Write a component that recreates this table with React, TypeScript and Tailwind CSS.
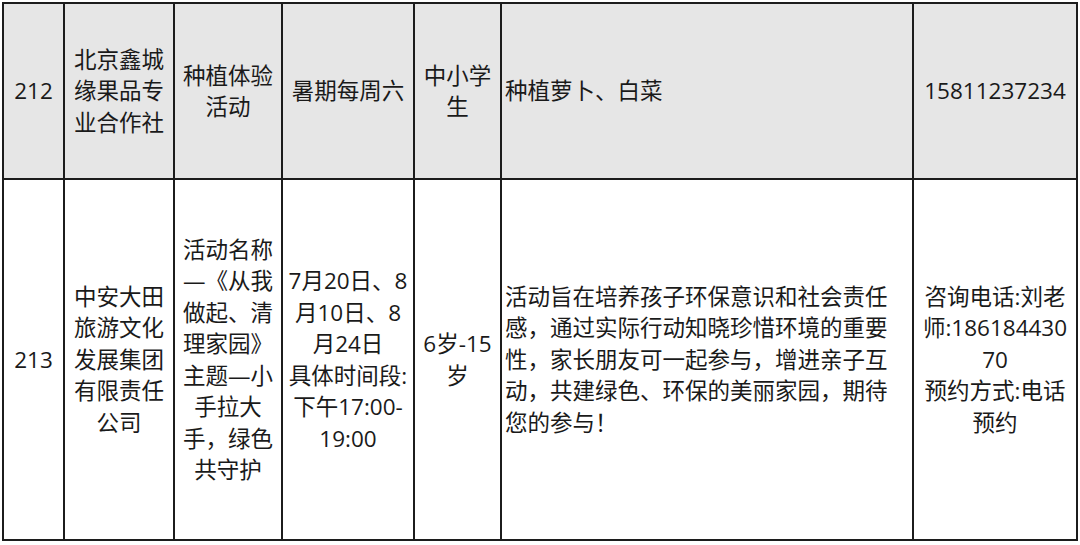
import React from 'react';

type Cell = {
    lines: string[];
    align?: 'center' | 'left';
};

const rows: { bg: string; height: string; cells: Cell[] }[] = [
    {
        bg: 'bg-[#e6e6e6]',
        height: 'h-[176px]',
        cells: [
            { lines: ['212'] },
            { lines: ['北京鑫城', '缘果品专', '业合作社'] },
            { lines: ['种植体验', '活动'] },
            { lines: ['暑期每周六'] },
            { lines: ['中小学', '生'] },
            { lines: ['种植萝卜、白菜'], align: 'left' },
            { lines: ['15811237234'] },
        ],
    },
    {
        bg: 'bg-white',
        height: 'h-[361px]',
        cells: [
            { lines: ['213'] },
            { lines: ['中安大田', '旅游文化', '发展集团', '有限责任', '公司'] },
            {
                lines: [
                    '活动名称',
                    '—《从我',
                    '做起、清',
                    '理家园》',
                    '主题—小',
                    '手拉大',
                    '手，绿色',
                    '共守护',
                ],
            },
            {
                lines: [
                    '7月20日、8',
                    '月10日、8',
                    '月24日',
                    '具体时间段:',
                    '下午17:00-',
                    '19:00',
                ],
            },
            { lines: ['6岁-15', '岁'] },
            {
                lines: [
                    '活动旨在培养孩子环保意识和社会责任',
                    '感，通过实际行动知晓珍惜环境的重要',
                    '性，家长朋友可一起参与，增进亲子互',
                    '动，共建绿色、环保的美丽家园，期待',
                    '您的参与！',
                ],
                align: 'left',
            },
            {
                lines: [
                    '咨询电话:刘老',
                    '师:186184430',
                    '70',
                    '预约方式:电话',
                    '预约',
                ],
            },
        ],
    },
];

const App: React.FC = () => {
    return (
        <div className="h-[545px] w-[1080px] overflow-hidden bg-white pt-[2px] pl-[2px] font-['Open_Sans','Noto_Sans_CJK_SC',sans-serif] text-[22.5px] leading-[31.5px] text-[#1a1a1a]">
            {/* Table */}
            <div className="grid w-[1076px] grid-cols-[61px_110px_108px_132px_87px_412px_164px] border-t-2 border-l-2 border-[#1c1c1c]">
                {rows.map((row, r) =>
                    row.cells.map((cell, c) => (
                        <div
                            key={`${r}-${c}`}
                            className={`${row.bg} ${row.height} flex items-center border-r-2 border-b-2 border-[#1c1c1c] ${
                                cell.align === 'left'
                                    ? 'justify-start pl-[3px] text-left'
                                    : 'justify-center text-center'
                            }`}
                        >
                            <div className="whitespace-nowrap">
                                {cell.lines.map((line, i) => (
                                    <div key={i}>{line}</div>
                                ))}
                            </div>
                        </div>
                    ))
                )}
            </div>
        </div>
    );
};

export default App;
